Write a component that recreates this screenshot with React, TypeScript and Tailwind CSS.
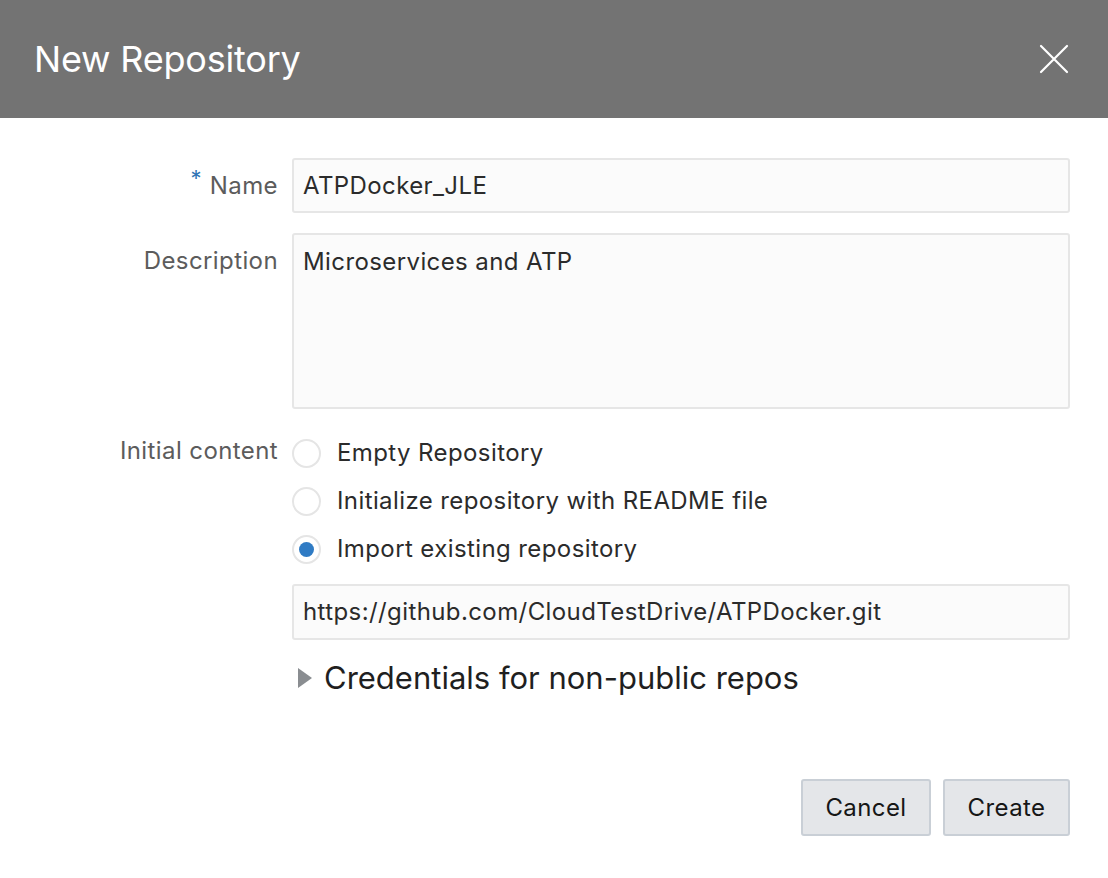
const font = { fontFamily: "Inter, 'Noto Sans', sans-serif" };

const Radio = ({ checked, label }: { checked?: boolean; label: string }) => (
  <label className="flex items-center h-[48px]">
    <span className="flex items-center justify-center w-[29px] h-[29px] rounded-full border-2 border-[#e5e5e5] bg-white">
      {checked && <span className="w-[15px] h-[15px] rounded-full bg-[#2f7bc4]" />}
    </span>
    <span className="ml-[16px] text-[24px] tracking-[0.4px] text-[#2b2b2b]">{label}</span>
  </label>
);

export default function App() {
  return (
    <div className="w-[1108px] h-[878px] bg-white" style={font}>
      <div className="h-[118px] bg-[#737373] flex items-center justify-between pl-[34px] pr-[39px]">
        <h1 className="text-[36px] text-white tracking-[-0.2px]">New Repository</h1>
        <svg width="30" height="30" viewBox="0 0 30 30">
          <path d="M2 2 L28 28 M28 2 L2 28" stroke="white" strokeWidth="2.2" strokeLinecap="round" />
        </svg>
      </div>

      <div className="pt-[40px] pr-[38px] tracking-[0.4px]">
        <div className="grid grid-cols-[278px_1fr] gap-x-[14px]">
          <div className="flex items-center justify-end h-[55px] text-[24px] text-[#5c5c5c]">
            <span className="text-[#2f74b5] text-[22px] mr-[8px] -mt-[14px]">*</span>
            Name
          </div>
          <div className="h-[55px] border-2 border-[#e6e6e6] rounded-[3px] bg-[#fbfbfb] flex items-center px-[9px] text-[24px] text-[#2b2b2b]">
            ATPDocker_JLE
          </div>

          <div className="mt-[20px] flex justify-end pt-[10px] text-[24px] text-[#5c5c5c]">Description</div>
          <div className="mt-[20px] h-[176px] border-2 border-[#e6e6e6] rounded-[3px] bg-[#fbfbfb] px-[9px] pt-[9px] text-[24px] text-[#2b2b2b]">
            Microservices and ATP
          </div>

          <div className="mt-[20px] flex justify-end h-[48px] items-center text-[24px] text-[#5c5c5c] -translate-y-[2px]">
            Initial content
          </div>
          <div className="mt-[20px] flex flex-col">
            <Radio label="Empty Repository" />
            <Radio label="Initialize repository with README file" />
            <Radio checked label="Import existing repository" />
            <div className="mt-[11px] h-[56px] border-2 border-[#e6e6e6] rounded-[3px] bg-[#fbfbfb] flex items-center px-[9px] text-[24px] text-[#2b2b2b]">
              https://github.com/CloudTestDrive/ATPDocker.git
            </div>
            <div className="mt-[16px] flex items-center h-[44px]">
              <svg width="16" height="22" viewBox="0 0 16 22" className="ml-[5px]">
                <path d="M1 1 L15 11 L1 21 Z" fill="#8a8d91" />
              </svg>
              <span className="ml-[11px] text-[31px] tracking-[0px] text-[#1f1f1f]">Credentials for non-public repos</span>
            </div>
          </div>
        </div>

        <div className="flex justify-end gap-[12px] mt-[79px]">
          <button className="w-[130px] h-[57px] rounded-[3px] border-2 border-[#c9cfd6] bg-[#e4e6e9] text-[24px] text-[#161616]">
            Cancel
          </button>
          <button className="w-[127px] h-[57px] rounded-[3px] border-2 border-[#c9cfd6] bg-[#e4e6e9] text-[24px] text-[#161616]">
            Create
          </button>
        </div>
      </div>
    </div>
  );
}
